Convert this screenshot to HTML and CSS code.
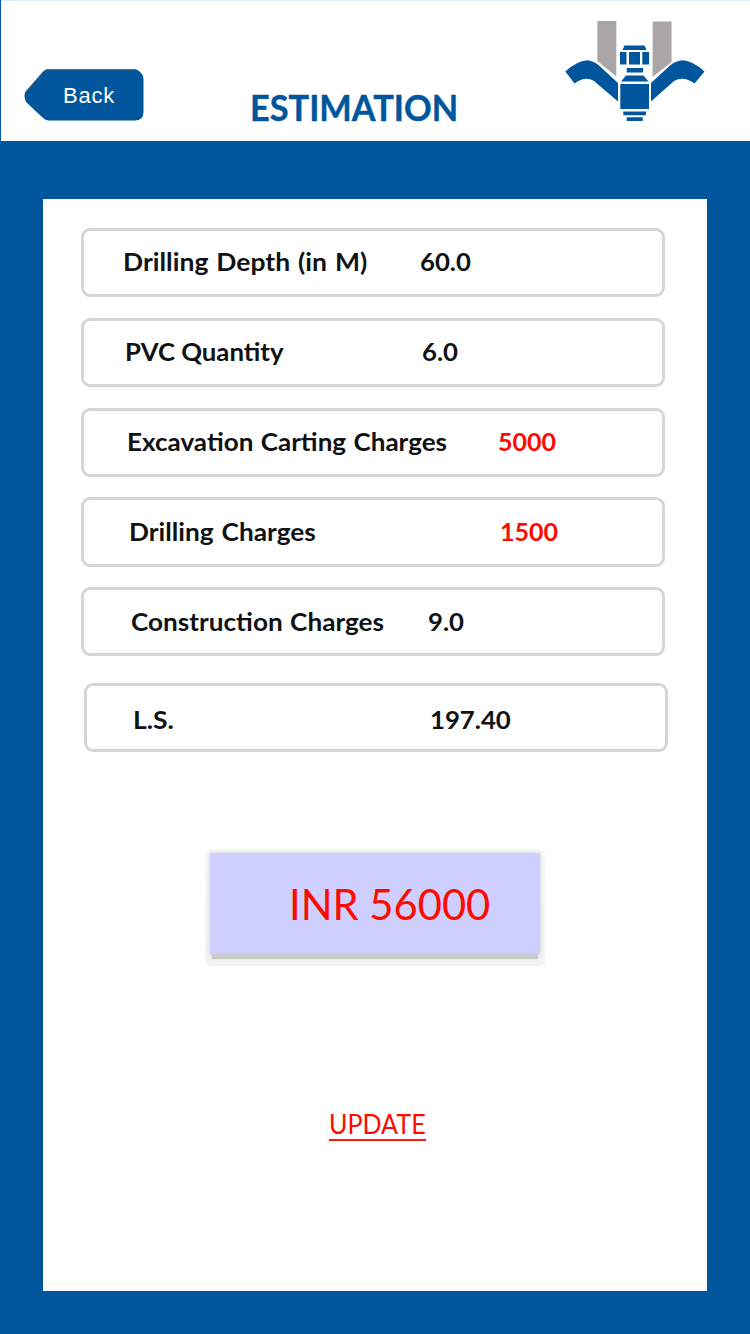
FILE: index.html
```
<!DOCTYPE html>
<html lang="en">
<head>
<meta charset="utf-8">
<title>Estimation</title>
<link rel="stylesheet" href="styles.css">
</head>
<body>
<div class="screen">
  <header class="header">
    <a class="back">
      <svg class="back-shape" width="120" height="52" viewBox="0 0 120 52" aria-hidden="true">
        <path d="M23 .5H112Q114 .5 116 3L118 5Q119.500 7 119.500 10V43Q119.500 51.500 111 51.500H25Q22 51.500 19 49L2 33Q-1 26 2 22L19 3Q21 .5 23 .5Z" fill="#00569c"/>
        <path d="M1 24L19 3Q21 .7 23 .7H112" fill="none" stroke="#53616b" stroke-width="1"/>
      </svg>
      <span class="back-label">Back</span>
    </a>
    <h1 class="title">ESTIMATION</h1>
    <svg class="logo" width="140" height="102" viewBox="565 20 140 102" aria-hidden="true">
      <path d="M597.300 21H616.300V76.500L597.300 61ZM652.600 21.500H671.600V62L652.600 77Z" fill="#aaa5a7"/>
      <g fill="#00569c">
        <path d="M565.300 71.500Q577 61 587 60.300Q593 60.500 599 65.500L618 83V101.500L594 81Q585 75.500 574.500 83.500Z"/>
        <path d="M704.500 71.500Q693 61 683 60.300Q676 60.500 670 65.500L651 83V101.500L674 81Q684 75.500 694.500 83.500Z"/>
        <path d="M624.500 45.500H644.500L646.500 50H622.500ZM620 52H626.500V64.500H620ZM629 52H640V64.500H629ZM642.300 52H649V64.500H642.300ZM626.700 68H643V72.500H626.700ZM626 75.500H643.500L648.500 81.500H621ZM620.300 84H649V109H620.300ZM623.300 111.500H646V115.300H623.300ZM626.700 117.200H642.700V121H626.700Z"/>
      </g>
    </svg>
  </header>
  <main class="card">
    <dl class="fields">
      <div class="field depth"><dt>Drilling Depth (in M)</dt><dd>60.0</dd></div>
      <div class="field pvc"><dt>PVC Quantity</dt><dd>6.0</dd></div>
      <div class="field carting"><dt>Excavation Carting Charges</dt><dd class="alert">5000</dd></div>
      <div class="field drilling"><dt>Drilling Charges</dt><dd class="alert">1500</dd></div>
      <div class="field construction"><dt>Construction Charges</dt><dd>9.0</dd></div>
      <div class="field sum"><dt>L.S.</dt><dd>197.40</dd></div>
    </dl>
    <div class="total-frame"><div class="total"><span class="total-text">INR 56000</span></div></div>
    <a class="update"><span class="update-text">UPDATE</span></a>
  </main>
</div>
</body>
</html>
```
FILE: styles.css
```
* { box-sizing: border-box; }
body { margin: 0; font-family: Lato, "Liberation Sans", sans-serif; }
.screen {
  display: flex; flex-direction: column;
  width: 750px; height: 1334px;
  background: #00569c;
}
.header {
  display: flex; align-items: flex-start;
  height: 141px; margin-left: 1px; padding-left: 23px;
  background: #fff; border-top: 1px solid #dce8f5;
}
.back { display: grid; width: 120px; height: 52px; margin-top: 68px; }
.back-shape, .back-label { grid-area: 1 / 1; }
.back-label {
  padding-left: 39px; color: #fff;
  font: 22px/53px "Liberation Sans", sans-serif; letter-spacing: .8px;
}
.title {
  width: 207px; margin: 82px 0 0 106px;
  color: #00569c; font-size: 36px; line-height: 48px; font-weight: 700;
  -webkit-text-stroke: .4px #00569c;
  white-space: nowrap; transform: scaleX(.954); transform-origin: left;
}
.logo { margin: 19px 0 0 108px; }
.card {
  display: flex; flex-direction: column;
  width: 664px; height: 1092px; margin: 58px 0 0 43px;
  padding: 29px 0 0 38px; background: #fff;
}
.fields { display: flex; flex-direction: column; gap: 20.500px; margin: 0; }
.field {
  display: flex; width: 584px; height: 69.300px;
  border: 3px solid #d6d6d6; border-radius: 9px;
  font-size: 25px; line-height: 60px; font-weight: 700; color: #101214;
}
.field dt { white-space: nowrap; transform-origin: left; }
.field dd { margin: 0; transform: scaleX(1.03); transform-origin: left; }
.field .alert { color: #ff0a00; transform: none; }
.depth { padding-left: 38.500px; } .depth dt { width: 297px; transform: scaleX(1.06); word-spacing: 1.400px; }
.pvc { padding-left: 40.500px; } .pvc dt { width: 297px; transform: scaleX(1.03); }
.carting { padding-left: 42.500px; } .carting dt { width: 371.500px; transform: scaleX(1.042); word-spacing: 1px; }
.drilling { padding-left: 44.500px; line-height: 62px; } .drilling dt { width: 371.500px; transform: scaleX(1.05); word-spacing: 1.500px; }
.construction { padding-left: 47px; line-height: 62px; } .construction dt { width: 296.500px; transform: scaleX(1.046); word-spacing: 1px; }
.sum { margin: 6px 0 0 3px; padding-left: 46px; line-height: 66px; } .sum dt { width: 296.500px; transform: scaleX(1.06); }
.total-frame {
  width: 340px; height: 117px; margin: 97px 0 0 124px; padding: 4px 5px 0 5px;
  background: linear-gradient(#f8f8f8, #f2f2f2); border-radius: 5px;
}
.total {
  height: 101px; padding-left: 79px; background: #cfcfff;
  box-shadow: 0 7px 1px -2px #cacaca, 0 0 4px #d0d0d0;
  color: #ff0a00; font-size: 42px; line-height: 102px;
}
.total-text, .update-text { display: inline-block; white-space: nowrap; transform-origin: left; }
.total-text { transform: scaleX(.993); }
.update-text { transform: scaleX(.965); }
.update {
  width: 97px; height: 33px; margin: 142px 0 0 248px;
  border-bottom: 2px solid #ff1a10; color: #ff0a00;
  font-size: 26px; line-height: 32px;
}
```
